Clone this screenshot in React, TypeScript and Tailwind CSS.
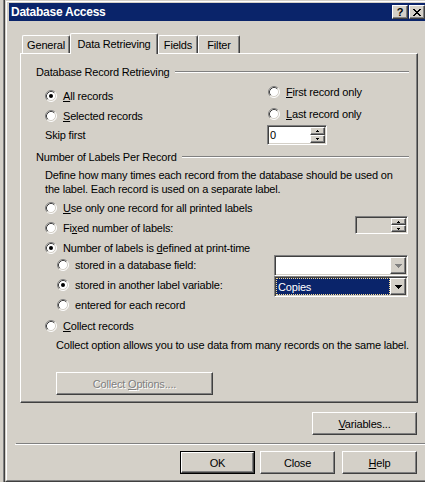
import React from "react";

type P = { children?: React.ReactNode; className?: string };

const bevel =
  "border border-t-white border-l-white border-r-[#404040] border-b-[#404040] shadow-[inset_-1px_-1px_0_#808080] bg-[#d4d0c8]";
const sunken =
  "border border-t-[#808080] border-l-[#808080] border-r-white border-b-white shadow-[inset_1px_1px_0_#404040,inset_-1px_-1px_0_#d4d0c8]";

function Radio({ checked }: { checked?: boolean }) {
  return (
    <svg width="12" height="12" viewBox="0 0 12 12" className="shrink-0">
      <circle cx="6" cy="6" r="5" fill="#ffffff" />
      <path d="M2.11 9.89 A5.5 5.5 0 0 1 9.89 2.11" fill="none" stroke="#808080" strokeWidth="1" />
      <path d="M9.89 2.11 A5.5 5.5 0 0 1 2.11 9.89" fill="none" stroke="#ffffff" strokeWidth="1" />
      <path d="M2.82 9.18 A4.5 4.5 0 0 1 9.18 2.82" fill="none" stroke="#404040" strokeWidth="1" />
      <path d="M9.18 2.82 A4.5 4.5 0 0 1 2.82 9.18" fill="none" stroke="#d4d0c8" strokeWidth="1" />
      {checked && <circle cx="6" cy="6" r="2" fill="#000000" />}
    </svg>
  );
}

function RadioRow({ checked, className, children }: P & { checked?: boolean }) {
  return (
    <div className={`flex items-center gap-[6px] whitespace-nowrap ${className ?? ""}`}>
      <Radio checked={checked} />
      <span>{children}</span>
    </div>
  );
}

function SpinUp() {
  return (
    <svg width="3" height="2" viewBox="0 0 3 2" shapeRendering="crispEdges">
      <rect x="1" y="0" width="1" height="1" fill="#000" />
      <rect x="0" y="1" width="3" height="1" fill="#000" />
    </svg>
  );
}
function SpinDown() {
  return (
    <svg width="3" height="2" viewBox="0 0 3 2" shapeRendering="crispEdges">
      <rect x="0" y="0" width="3" height="1" fill="#000" />
      <rect x="1" y="1" width="1" height="1" fill="#000" />
    </svg>
  );
}
function ComboArrow({ color }: { color: string }) {
  return (
    <svg width="7" height="4" viewBox="0 0 7 4" shapeRendering="crispEdges">
      <rect x="0" y="0" width="7" height="1" fill={color} />
      <rect x="1" y="1" width="5" height="1" fill={color} />
      <rect x="2" y="2" width="3" height="1" fill={color} />
      <rect x="3" y="3" width="1" height="1" fill={color} />
    </svg>
  );
}

function Spin({ value, disabled, className }: { value?: string; disabled?: boolean; className?: string }) {
  return (
    <div className={`${sunken} p-px flex ${disabled ? "bg-[#d4d0c8]" : "bg-white"} ${className ?? ""}`}>
      <div className="flex-1 pl-px flex items-center">{value}</div>
      <div className="w-[15px] flex flex-col">
        <div className={`${bevel} flex-1 flex items-center justify-center`}>
          <SpinUp />
        </div>
        <div className={`${bevel} flex-1 flex items-center justify-center`}>
          <SpinDown />
        </div>
      </div>
    </div>
  );
}

function Combo({ children, arrowColor }: P & { arrowColor: string }) {
  return (
    <div className={`${sunken} p-px flex bg-white h-[21px]`}>
      <div className="flex-1 min-w-0 flex">{children}</div>
      <div className={`${bevel} w-[16px] flex items-center justify-center`}>
        <ComboArrow color={arrowColor} />
      </div>
    </div>
  );
}

function Button({
  children,
  className,
  isDefault,
  disabled,
}: P & { isDefault?: boolean; disabled?: boolean }) {
  const inner = (
    <div
      className={`${bevel} w-full h-full flex items-center justify-center whitespace-nowrap ${
        disabled ? "text-[#808080] [text-shadow:1px_1px_0_#ffffff]" : ""
      }`}
    >
      <span>{children}</span>
    </div>
  );
  if (isDefault) return <div className={`border border-black ${className ?? ""}`}>{inner}</div>;
  return <div className={className}>{inner}</div>;
}

function GroupHeader({ children, className }: P) {
  return (
    <div className={`ml-[15px] mr-[8px] h-[14px] flex items-center whitespace-nowrap ${className ?? ""}`}>
      <span>{children}</span>
      <div className="ml-[5px] flex-1 h-[2px] border-t border-b border-t-[#808080] border-b-white" />
    </div>
  );
}

function Tab({ children, className }: P) {
  return (
    <div
      className={`h-[18px] flex items-center justify-center whitespace-nowrap border-t border-l border-r border-t-white border-l-white border-r-[#404040] shadow-[inset_-1px_0_0_#808080] rounded-t-[2px] ${
        className ?? ""
      }`}
    >
      {children}
    </div>
  );
}

function CloseGlyph() {
  return (
    <svg width="8" height="7" viewBox="0 0 8 7" shapeRendering="crispEdges">
      <rect x="0" y="0" width="2" height="1" fill="#000" />
      <rect x="6" y="0" width="2" height="1" fill="#000" />
      <rect x="1" y="1" width="2" height="1" fill="#000" />
      <rect x="5" y="1" width="2" height="1" fill="#000" />
      <rect x="2" y="2" width="4" height="1" fill="#000" />
      <rect x="3" y="3" width="2" height="1" fill="#000" />
      <rect x="2" y="4" width="4" height="1" fill="#000" />
      <rect x="1" y="5" width="2" height="1" fill="#000" />
      <rect x="5" y="5" width="2" height="1" fill="#000" />
      <rect x="0" y="6" width="2" height="1" fill="#000" />
      <rect x="6" y="6" width="2" height="1" fill="#000" />
    </svg>
  );
}

export default function App() {
  return (
    <div className="w-[425px] h-[482px] overflow-hidden bg-[#d4d0c8] flex font-['Liberation_Sans',Arial,sans-serif] text-[11px] leading-[14px] tracking-[-0.18px] text-black">
      {/* edge of window behind */}
      <div className="flex shrink-0">
        <div className="w-[3px]" />
        <div className="w-px bg-[#808080]" />
        <div className="w-px bg-[#404040]" />
      </div>

      {/* dialog window */}
      <div className="shrink-0 w-[430px] h-[482px] border-l border-t border-b border-l-[#d4d0c8] border-t-[#d4d0c8] border-b-[#404040]">
        <div className="h-full border-l border-t border-b border-l-white border-t-white border-b-[#808080] pl-[2px] pt-px">
          {/* caption */}
          <div className="w-[418px] h-[18px] bg-[#0a246a] flex items-center pl-[2px] pr-[2px]">
            <span className="text-white font-bold text-[12px] tracking-[-0.25px] whitespace-nowrap">
              Database Access
            </span>
            <div className="ml-auto flex gap-px">
              <div className={`${bevel} w-[16px] h-[14px] flex items-center justify-center font-bold text-[11px] leading-none tracking-normal`}>
                ?
              </div>
              <div className={`${bevel} w-[16px] h-[14px] flex items-center justify-center`}>
                <CloseGlyph />
              </div>
            </div>
          </div>

          {/* tabs */}
          <div className="relative z-10 mt-[12px] ml-[13px] h-[20px] flex items-end">
            <Tab className="w-[48px]">General</Tab>
            <div className="w-[88px] h-[21px] -mb-px pb-px flex items-center justify-center whitespace-nowrap bg-[#d4d0c8] border-t border-l border-r border-t-white border-l-white border-r-[#404040] shadow-[inset_-1px_0_0_#808080] rounded-t-[2px]">
              Data Retrieving
            </div>
            <Tab className="w-[40px]">Fields</Tab>
            <Tab className="w-[42px]">Filter</Tab>
          </div>

          {/* tab page */}
          <div className="ml-[11px] w-[398px] h-[350px] border border-t-white border-l-white border-r-[#404040] border-b-[#404040] shadow-[inset_-1px_-1px_0_#808080]">
            <GroupHeader className="mt-[11px]">Database Record Retrieving</GroupHeader>
            <div className="flex h-[66px]">
              <div className="ml-[24px] w-[222px]">
                <RadioRow checked className="mt-[7px] h-[20px]">
                  <u>A</u>ll records
                </RadioRow>
                <RadioRow className="h-[20px]">
                  <u>S</u>elected records
                </RadioRow>
                <div className="h-[18px] flex items-center whitespace-nowrap">Skip first</div>
              </div>
              <div className="pl-px">
                <RadioRow className="mt-[3px] h-[20px]">
                  <u>F</u>irst record only
                </RadioRow>
                <RadioRow className="mt-[2px] h-[20px]">
                  <u>L</u>ast record only
                </RadioRow>
                <Spin value="0" className="mt-px -ml-px w-[60px] h-[20px]" />
              </div>
            </div>

            <GroupHeader className="mt-[5px]">Number of Labels Per Record</GroupHeader>
            <div className="ml-[24px] mr-[9px]">
              <div className="mt-[4px] whitespace-nowrap">
                Define how many times each record from the database should be used on
                <br />
                the label. Each record is used on a separate label.
              </div>
              <RadioRow className="mt-[2px] h-[20px]">
                <u>U</u>se only one record for all printed labels
              </RadioRow>
              <div className="h-[19px] flex items-center">
                <RadioRow className="h-[19px]">
                  Fi<u>x</u>ed number of labels:
                </RadioRow>
                <Spin disabled className="ml-auto self-start -mt-[2px] w-[53px] h-[18px]" />
              </div>
              <RadioRow checked className="mt-[4px] h-[14px]">
                Number of labels is <u>d</u>efined at print-time
              </RadioRow>
              <div className="flex">
                <div className="pl-[12px]">
                  <RadioRow className="h-[20px]">stored in a database field:</RadioRow>
                  <RadioRow checked className="h-[20px]">
                    stored in another label variable:
                  </RadioRow>
                  <RadioRow className="h-[19px]">entered for each record</RadioRow>
                </div>
                <div className="ml-auto w-[134px]">
                  <Combo arrowColor="#808080">
                    <div className="flex-1" />
                  </Combo>
                  <Combo arrowColor="#000000">
                    <div className="flex-1 bg-[#0a246a] text-white border border-dotted border-[#f5db95] pl-px flex items-center">
                      Copies
                    </div>
                  </Combo>
                </div>
              </div>
              <RadioRow className="mt-[2px] h-[20px]">
                <u>C</u>ollect records
              </RadioRow>
              <div className="mt-[2px] pl-[11px] whitespace-nowrap">
                Collect option allows you to use data from many records on the same label.
              </div>
              <Button disabled className="mt-[20px] ml-[11px] w-[157px] h-[23px]">
                Collect <u>O</u>ptions....
              </Button>
            </div>
          </div>

          {/* variables */}
          <Button className="mt-[9px] ml-[303px] w-[105px] h-[23px]">
            <u>V</u>ariables...
          </Button>

          {/* separator */}
          <div className="mt-[8px] ml-[6px] flex">
            <div className="w-px h-px bg-white mt-px" />
            <div className="flex-1 h-[2px] border-t border-b border-t-[#808080] border-b-white" />
          </div>

          {/* bottom buttons */}
          <div className="mt-[6px] ml-[171px] flex">
            <Button isDefault className="w-[75px] h-[23px]">
              OK
            </Button>
            <Button className="ml-[5px] w-[75px] h-[23px]">Close</Button>
            <Button className="ml-[7px] w-[75px] h-[23px]">
              <u>H</u>elp
            </Button>
          </div>
        </div>
      </div>
    </div>
  );
}
